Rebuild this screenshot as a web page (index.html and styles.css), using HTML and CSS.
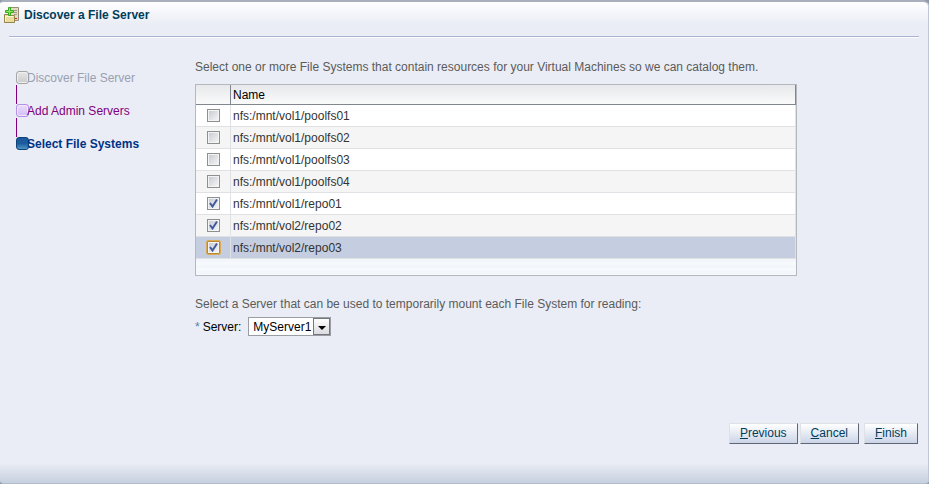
FILE: index.html
```html
<!DOCTYPE html>
<html lang="en">

<head>
    <meta charset="UTF-8">
    <meta name="viewport" content="width=device-width, initial-scale=1.0">
    <title>Discover a File Server</title>
    <link rel="stylesheet" href="styles.css">
</head>

<body>

    <form class="dialog">
        <header class="title-bar">
            <svg class="title-icon" width="16" height="17" viewBox="0 0 16 17" aria-hidden="true">
                <path d="M5.500 .5h9v13h-9z" fill="#e2dcc6" stroke="#978d74"/>
                <path d="M10 3.500h3M10 5.500h3M10 7.500h3" stroke="#a39a80"/>
                <path d="M11 11h2v1h-2z" fill="#d22b20"/>
                <path d="M.5 15.500v-8h4l1 1h5v7z" fill="#e9dc9c" stroke="#94834a"/>
                <path d="M1.500 14.500v-5h8" fill="none" stroke="#fdf6d4"/>
                <path d="M4.500 .5h2v3h3v2h-3v3h-2v-3h-3v-2h3z" fill="#8ae85a" stroke="#36a81e"/>
            </svg>
            <h1>Discover a File Server</h1>
        </header>

        <main class="content">
            <ol class="steps">
                <li class="step visited"><span class="stop"></span>Discover File Server</li>
                <li class="step next"><span class="stop"></span><a href="#">Add Admin Servers</a></li>
                <li class="step current"><span class="stop"></span>Select File Systems</li>
            </ol>

            <section class="panel">
                <p>Select one or more File Systems that contain resources for your Virtual Machines so we can catalog them.</p>

                <div class="table-box">
                    <table>
                        <thead>
                            <tr><th class="check-col"></th><th>Name</th></tr>
                        </thead>
                        <tbody>
                            <tr><td class="check-col"><input type="checkbox" id="fs1"></td><td><label for="fs1">nfs:/mnt/vol1/poolfs01</label></td></tr>
                            <tr><td class="check-col"><input type="checkbox" id="fs2"></td><td><label for="fs2">nfs:/mnt/vol1/poolfs02</label></td></tr>
                            <tr><td class="check-col"><input type="checkbox" id="fs3"></td><td><label for="fs3">nfs:/mnt/vol1/poolfs03</label></td></tr>
                            <tr><td class="check-col"><input type="checkbox" id="fs4"></td><td><label for="fs4">nfs:/mnt/vol1/poolfs04</label></td></tr>
                            <tr><td class="check-col"><input type="checkbox" id="fs5" checked></td><td><label for="fs5">nfs:/mnt/vol1/repo01</label></td></tr>
                            <tr><td class="check-col"><input type="checkbox" id="fs6" checked></td><td><label for="fs6">nfs:/mnt/vol2/repo02</label></td></tr>
                            <tr class="selected"><td class="check-col"><input type="checkbox" id="fs7" checked></td><td><label for="fs7">nfs:/mnt/vol2/repo03</label></td></tr>
                        </tbody>
                    </table>
                </div>

                <p>Select a Server that can be used to temporarily mount each File System for reading:</p>

                <div class="field">
                    <span class="required">*</span>
                    <label for="server">Server:</label>
                    <div class="select-box">
                        <select id="server">
                            <option>MyServer1</option>
                        </select>
                        <span class="arrow"></span>
                    </div>
                </div>
            </section>
        </main>

        <footer class="buttons">
            <button type="button"><u>P</u>revious</button>
            <button type="button"><u>C</u>ancel</button>
            <button type="button" class="finish"><u>F</u>inish</button>
        </footer>
    </form>

</body>

</html>
```
FILE: styles.css
```css
* {
    box-sizing: border-box;
}

body {
    margin: 0;
    background: #8b98a8;
    font-family: "Liberation Sans", Arial, sans-serif;
    font-size: 12px;
    line-height: 16px;
    color: #333;
}

.dialog {
    display: flex;
    flex-direction: column;
    min-height: 100vh;
    border-top: 2px solid #a9afbd;
    border-right: 1px solid #c0c6d6;
    border-bottom: 1px solid #b4bccb;
    border-radius: 4px 6px 4px 4px;
    background:
        linear-gradient(#fff, #eaedf5) top / 100% 22px no-repeat,
        linear-gradient(#eaedf5, #c6d0df) bottom / 100% 20px no-repeat,
        #eaedf5;
}

/* title */
.title-bar {
    display: flex;
    gap: 4px;
    height: 35px;
    margin: 0 9px;
    padding-top: 5px;
    border-bottom: 1px solid #a9b5d0;
    box-shadow: 0 1px #fff;
}

.title-icon {
    margin-left: -5px;
}

h1 {
    margin: 0;
    font-size: 12px;
    color: #003d5b;
}

.content {
    display: flex;
    flex: 1;
    padding: 22px 16px 0;
}

/* train of wizard steps */
.steps {
    width: 179px;
    margin: 0;
    padding: 11px 0 0;
    list-style: none;
}

.step {
    position: relative;
    display: flex;
    height: 33px;
    color: #98a1b3;
}

.step + .step::before {
    content: "";
    position: absolute;
    top: -18px;
    left: 0;
    width: 1px;
    height: 19px;
    background: #800080;
}

.step a {
    color: #800080;
    text-decoration: none;
}

.stop {
    flex: none;
    width: 13px;
    height: 13px;
    margin: 1px -2px 0 0;
    border: 1px solid #a5a5a5;
    border-radius: 3px;
    background: linear-gradient(#e6e6e6, #cbcbcb);
    box-shadow: inset 0 0 0 1px #efefef;
}

.next .stop {
    border-color: #b490e6;
    background: linear-gradient(#e9defb, #d3bef5);
    box-shadow: inset 0 0 0 1px #f0e8ff;
}

.current .stop {
    border-color: #0f4377;
    background: linear-gradient(#1c5c9c 50%, #4d96c8);
    box-shadow: none;
}

.current {
    font-weight: bold;
    color: #003286;
}

/* right side */
.panel {
    flex: 1;
}

.panel p {
    margin: 0;
    color: #5b5b5b;
}

.table-box {
    max-width: 602px;
    margin: 9px 0 20px;
    padding-bottom: 16px;
    border: 1px solid #b5b8bc;
    background: repeating-linear-gradient(#f3f7fb 0 3px, #f7fafd 3px 6px);
}

table {
    width: 100%;
    border-collapse: separate;
    border-spacing: 0;
}

th {
    height: 20px;
    padding: 0 2px;
    border-right: 1px solid #82878d;
    border-bottom: 1px solid #82878d;
    background: linear-gradient(#e6e8eb, #fafafa);
    font-weight: normal;
    text-align: left;
    color: #000;
}

td {
    height: 22px;
    padding: 0 2px;
    border-right: 1px solid #dfe1e4;
    border-bottom: 1px solid #dfe1e4;
    background: #fff;
}

tr:nth-child(even) td {
    background: #f5f5f5;
}

tr.selected td {
    background: #c5cde0;
}

.check-col {
    width: 35px;
    text-align: center;
}

input[type="checkbox"] {
    appearance: none;
    display: block;
    width: 13px;
    height: 13px;
    margin: 0 auto;
    border: 1px solid #8e8f8f;
    background: linear-gradient(135deg, #c4c8d0, #f8f8f8);
    box-shadow: inset 0 0 0 1px #f4f4f4;
}

input[type="checkbox"]:checked {
    background:
        url("data:image/svg+xml,%3Csvg xmlns='http://www.w3.org/2000/svg' viewBox='0 0 11 11'%3E%3Cpath d='M2 5 4.500 8.500 9 1.500' fill='none' stroke='%23425a9c' stroke-width='2'/%3E%3C/svg%3E") center / 11px 11px no-repeat,
        linear-gradient(135deg, #c4c8d0, #f8f8f8);
}

.selected input[type="checkbox"] {
    border-color: #b98a30;
    border-radius: 1px;
    outline: 1px solid #d9ab58;
}

.field {
    display: flex;
    align-items: center;
    gap: 3px;
    margin-top: 5px;
    color: #000;
}

.required {
    color: #5581b0;
}

.select-box {
    position: relative;
    margin-left: 4px;
}

select {
    appearance: none;
    display: block;
    width: 83px;
    height: 19px;
    padding: 0 4px;
    border: 1px solid #9a9da3;
    border-radius: 0;
    background: #fff;
    font: inherit;
    color: #000;
}

/* drop-down button over the right end of the select */
.arrow {
    position: absolute;
    top: 1px;
    right: 1px;
    display: flex;
    align-items: center;
    justify-content: center;
    width: 17px;
    height: 17px;
    border: 1px solid #73767c;
    background: linear-gradient(#fff, #d9dbdf);
    pointer-events: none;
}

.arrow::before {
    content: "";
    margin-top: 2px;
    border: 4px solid transparent;
    border-top-color: #000;
    border-bottom: 0;
}

.buttons {
    display: flex;
    justify-content: flex-end;
    gap: 2px;
    padding: 0 10px 39px;
}

button {
    height: 21px;
    padding: 0 10px 2px;
    border: 1px solid #dfe1e6;
    border-right-color: #5f6674;
    border-bottom-color: #5f6674;
    background: linear-gradient(#fff, #cbd5e8);
    font: inherit;
    color: #003d5b;
}

.finish {
    margin-left: 3px;
}
```
